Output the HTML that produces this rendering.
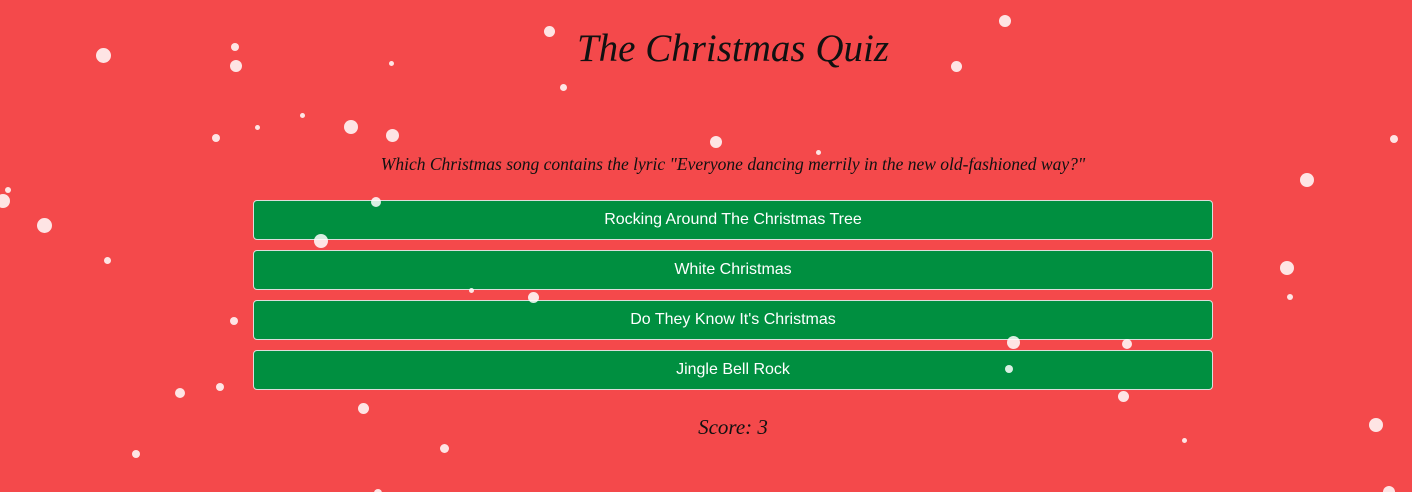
<!DOCTYPE html>
<html><head><style>
html,body{margin:0;padding:0;width:1412px;height:492px;overflow:hidden;background:#f4494b;position:relative;font-family:"Liberation Sans",sans-serif}
h1{position:absolute;left:0;width:1466px;top:26px;margin:0;text-align:center;font:italic 39px "Liberation Serif",serif;color:#111}
.q{position:absolute;left:0;width:1466px;top:154px;text-align:center;font:italic 17.5px "Liberation Serif",serif;color:#111}
.b{position:absolute;left:253px;width:958px;height:38px;background:#008f40;border:1px solid #ddd;border-radius:4px;color:#fff;font-size:16px;line-height:38px;text-align:center}
.s{position:absolute;left:0;width:1466px;top:415px;text-align:center;font:italic 21px "Liberation Serif",serif;color:#111}
.d{position:absolute;border-radius:50%;background:rgba(255,255,255,.85)}
</style></head><body>
<h1>The Christmas Quiz</h1>
<div class="q">Which Christmas song contains the lyric "Everyone dancing merrily in the new old-fashioned way?"</div>
<div class="b" style="top:200px">Rocking Around The Christmas Tree</div>
<div class="b" style="top:250px">White Christmas</div>
<div class="b" style="top:300px">Do They Know It's Christmas</div>
<div class="b" style="top:350px">Jingle Bell Rock</div>
<div class="s">Score: 3</div>
<div class="d" style="left:96px;top:48px;width:15px;height:15px"></div>
<div class="d" style="left:231px;top:43px;width:8px;height:8px"></div>
<div class="d" style="left:230px;top:60px;width:12px;height:12px"></div>
<div class="d" style="left:544px;top:26px;width:11px;height:11px"></div>
<div class="d" style="left:999px;top:15px;width:12px;height:12px"></div>
<div class="d" style="left:951px;top:61px;width:11px;height:11px"></div>
<div class="d" style="left:389px;top:61px;width:5px;height:5px"></div>
<div class="d" style="left:560px;top:84px;width:7px;height:7px"></div>
<div class="d" style="left:300px;top:113px;width:5px;height:5px"></div>
<div class="d" style="left:255px;top:125px;width:5px;height:5px"></div>
<div class="d" style="left:344px;top:120px;width:14px;height:14px"></div>
<div class="d" style="left:386px;top:129px;width:13px;height:13px"></div>
<div class="d" style="left:212px;top:134px;width:8px;height:8px"></div>
<div class="d" style="left:710px;top:136px;width:12px;height:12px"></div>
<div class="d" style="left:816px;top:150px;width:5px;height:5px"></div>
<div class="d" style="left:1390px;top:135px;width:8px;height:8px"></div>
<div class="d" style="left:1300px;top:173px;width:14px;height:14px"></div>
<div class="d" style="left:5px;top:187px;width:6px;height:6px"></div>
<div class="d" style="left:-4px;top:194px;width:14px;height:14px"></div>
<div class="d" style="left:37px;top:218px;width:15px;height:15px"></div>
<div class="d" style="left:371px;top:197px;width:10px;height:10px"></div>
<div class="d" style="left:314px;top:234px;width:14px;height:14px"></div>
<div class="d" style="left:104px;top:257px;width:7px;height:7px"></div>
<div class="d" style="left:1280px;top:261px;width:14px;height:14px"></div>
<div class="d" style="left:469px;top:288px;width:5px;height:5px"></div>
<div class="d" style="left:528px;top:292px;width:11px;height:11px"></div>
<div class="d" style="left:1287px;top:294px;width:6px;height:6px"></div>
<div class="d" style="left:230px;top:317px;width:8px;height:8px"></div>
<div class="d" style="left:1007px;top:336px;width:13px;height:13px"></div>
<div class="d" style="left:1122px;top:339px;width:10px;height:10px"></div>
<div class="d" style="left:1005px;top:365px;width:8px;height:8px"></div>
<div class="d" style="left:216px;top:383px;width:8px;height:8px"></div>
<div class="d" style="left:175px;top:388px;width:10px;height:10px"></div>
<div class="d" style="left:1118px;top:391px;width:11px;height:11px"></div>
<div class="d" style="left:358px;top:403px;width:11px;height:11px"></div>
<div class="d" style="left:1369px;top:418px;width:14px;height:14px"></div>
<div class="d" style="left:1182px;top:438px;width:5px;height:5px"></div>
<div class="d" style="left:440px;top:444px;width:9px;height:9px"></div>
<div class="d" style="left:132px;top:450px;width:8px;height:8px"></div>
<div class="d" style="left:1383px;top:486px;width:12px;height:12px"></div>
<div class="d" style="left:374px;top:489px;width:8px;height:8px"></div>
</body></html>
